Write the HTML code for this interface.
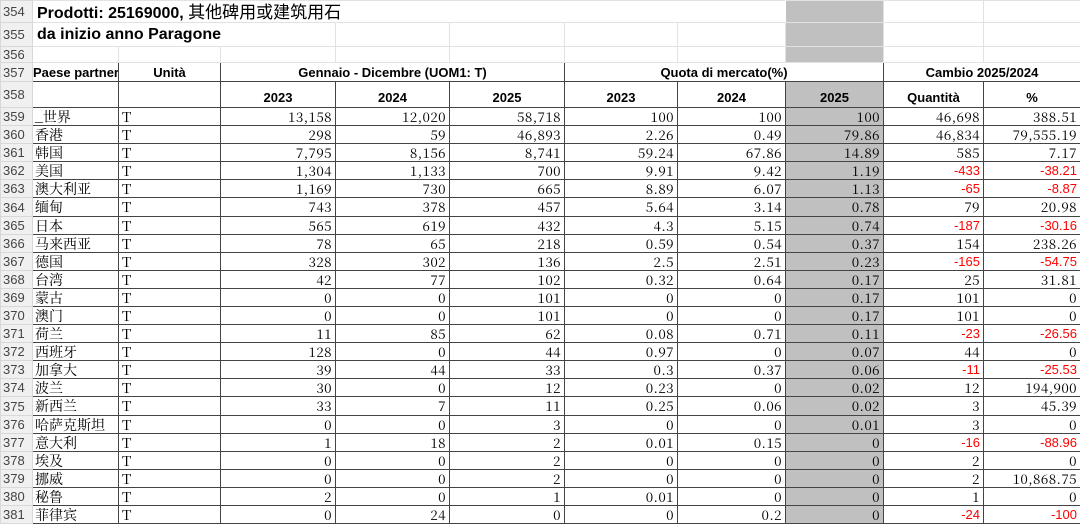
<!DOCTYPE html>
<html><head><meta charset="utf-8"><style>
body{margin:0;width:1080px;height:523px;overflow:hidden;background:#fff;font-family:"Liberation Sans","Noto Sans CJK SC",sans-serif}
table{border-collapse:collapse;table-layout:fixed;width:1080px;position:absolute;left:0;top:0}
td{padding:0 3px;white-space:nowrap;overflow:hidden;border:1px solid #e2e2e2;font-size:14px;line-height:1;color:#000}
td.rh{background:#f0f0f0;color:#444;font-size:13px;padding:0 0 0 2px;border-color:#d8d8d8}
td.g{background:#c0c0c0}
.t td.b,td.b{border:1px solid #444}
.h{font-weight:bold;text-align:center;font-size:13px}
.n{text-align:right;font-family:"Noto Serif CJK SC","Liberation Serif",serif;font-size:13.5px;letter-spacing:0.4px}
.c{font-family:"Noto Serif CJK SC","Liberation Serif",serif;font-size:14px}
.r{color:#f00;font-family:"Liberation Sans",sans-serif;font-size:13px;letter-spacing:0}
.tt{font-weight:bold;font-size:16px;padding-left:4px}
.tt span{font-weight:normal;font-family:"Noto Sans CJK SC",sans-serif;font-size:17px}
</style></head><body>
<table>
<colgroup><col style="width:32px"><col style="width:86px"><col style="width:102px"><col style="width:115px"><col style="width:114px"><col style="width:115px"><col style="width:113px"><col style="width:108px"><col style="width:98px"><col style="width:100px"><col style="width:97px"></colgroup>
<tr style="height:22px"><td class="rh">354</td><td colspan="7" class="tt" style="border-right-color:#fff">Prodotti: 25169000, <span>其他碑用或建筑用石</span></td><td class="g"></td><td></td><td></td></tr>
<tr style="height:24px"><td class="rh">355</td><td colspan="3" class="tt">da inizio anno Paragone</td><td></td><td></td><td></td><td></td><td class="g"></td><td></td><td></td></tr>
<tr style="height:16px"><td class="rh">356</td><td></td><td></td><td></td><td></td><td></td><td></td><td></td><td class="g"></td><td></td><td></td></tr>
<tr style="height:19px"><td class="rh">357</td><td class="b h" style="padding:0">Paese partner</td><td class="b h">Unità</td><td class="b h" colspan="3">Gennaio - Dicembre (UOM1: T)</td><td class="b h" colspan="3">Quota di mercato(%)</td><td class="b h" colspan="2">Cambio 2025/2024</td></tr>
<tr style="height:26px"><td class="rh">358</td><td class="b"></td><td class="b"></td><td class="b h" style="vertical-align:bottom;padding-bottom:3px">2023</td><td class="b h" style="vertical-align:bottom;padding-bottom:3px">2024</td><td class="b h" style="vertical-align:bottom;padding-bottom:3px">2025</td><td class="b h" style="vertical-align:bottom;padding-bottom:3px">2023</td><td class="b h" style="vertical-align:bottom;padding-bottom:3px">2024</td><td class="b h g" style="vertical-align:bottom;padding-bottom:3px">2025</td><td class="b h" style="vertical-align:bottom;padding-bottom:3px">Quantità</td><td class="b h" style="vertical-align:bottom;padding-bottom:3px">%</td></tr>
</table>
<table style="top:107px">
<colgroup><col style="width:32px"><col style="width:86px"><col style="width:102px"><col style="width:115px"><col style="width:114px"><col style="width:115px"><col style="width:113px"><col style="width:108px"><col style="width:98px"><col style="width:100px"><col style="width:97px"></colgroup>
<tbody id="b"></tbody></table>
<script>
var d=[["_世界","13,158","12,020","58,718","100","100","100","46,698","388.51"],
["香港","298","59","46,893","2.26","0.49","79.86","46,834","79,555.19"],
["韩国","7,795","8,156","8,741","59.24","67.86","14.89","585","7.17"],
["美国","1,304","1,133","700","9.91","9.42","1.19","-433","-38.21"],
["澳大利亚","1,169","730","665","8.89","6.07","1.13","-65","-8.87"],
["缅甸","743","378","457","5.64","3.14","0.78","79","20.98"],
["日本","565","619","432","4.3","5.15","0.74","-187","-30.16"],
["马来西亚","78","65","218","0.59","0.54","0.37","154","238.26"],
["德国","328","302","136","2.5","2.51","0.23","-165","-54.75"],
["台湾","42","77","102","0.32","0.64","0.17","25","31.81"],
["蒙古","0","0","101","0","0","0.17","101","0"],
["澳门","0","0","101","0","0","0.17","101","0"],
["荷兰","11","85","62","0.08","0.71","0.11","-23","-26.56"],
["西班牙","128","0","44","0.97","0","0.07","44","0"],
["加拿大","39","44","33","0.3","0.37","0.06","-11","-25.53"],
["波兰","30","0","12","0.23","0","0.02","12","194,900"],
["新西兰","33","7","11","0.25","0.06","0.02","3","45.39"],
["哈萨克斯坦","0","0","3","0","0","0.01","3","0"],
["意大利","1","18","2","0.01","0.15","0","-16","-88.96"],
["埃及","0","0","2","0","0","0","2","0"],
["挪威","0","0","2","0","0","0","2","10,868.75"],
["秘鲁","2","0","1","0.01","0","0","1","0"],
["菲律宾","0","24","0","0","0.2","0","-24","-100"]];
var h="";d.forEach(function(r,i){h+='<tr style="height:'+(i==5||i==16?19:18)+'px"><td class="rh">'+(359+i)+'</td><td class="b c" style="padding:0 2px">'+r[0]+'</td><td class="b c">T</td>';
for(var j=1;j<9;j++){var v=r[j];var neg=v[0]=="-";h+='<td class="b n'+(j==6?' g':'')+(neg?' r':'')+'">'+v+'</td>';}h+='</tr>';});
document.getElementById("b").innerHTML=h;
</script>
</body></html>
